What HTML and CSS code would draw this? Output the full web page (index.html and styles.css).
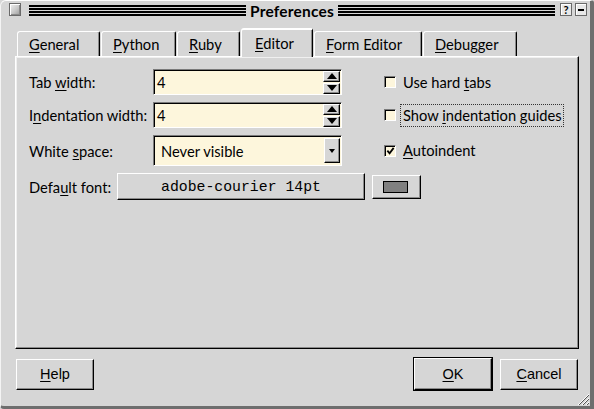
FILE: index.html
```html
<!DOCTYPE html>
<html>
<head>
<meta charset="utf-8">
<title>Preferences</title>
<link rel="stylesheet" href="styles.css">
</head>
<body>
<div class="window">
  <div class="titlebar">
    <span class="tbox close"></span>
    <span class="lines left"></span>
    <span class="title">Preferences</span>
    <span class="lines right"></span>
    <span class="tbox help">?</span>
    <span class="tbox min"><span class="bar"></span></span>
  </div>

  <div class="tabs">
    <div class="tab w-general"><u>G</u>eneral</div>
    <div class="tab w-python"><u>P</u>ython</div>
    <div class="tab w-ruby"><u>R</u>uby</div>
    <div class="tab selected w-editor"><u>E</u>ditor</div>
    <div class="tab w-form"><u>F</u>orm Editor</div>
    <div class="tab w-debug"><u>D</u>ebugger</div>
  </div>

  <div class="panel">
    <div class="grid">
      <div class="label">Tab <u>w</u>idth:</div>
      <div class="field">
        <span class="value">4</span>
        <span class="spin">
          <span class="sbtn"><span class="up"></span></span>
          <span class="sbtn"><span class="down"></span></span>
        </span>
      </div>
      <div class="check"><span class="box"></span><span class="ctext">Use hard <u>t</u>abs</span></div>

      <div class="label">I<u>n</u>dentation width:</div>
      <div class="field">
        <span class="value">4</span>
        <span class="spin">
          <span class="sbtn"><span class="up"></span></span>
          <span class="sbtn"><span class="down"></span></span>
        </span>
      </div>
      <div class="check"><span class="box"></span><span class="ctext focus">Show <u>i</u>ndentation guides</span></div>

      <div class="label">White <u>s</u>pace:</div>
      <div class="field combo">
        <span class="value combo-value">Never visible</span>
        <span class="dropbtn"><span class="down small"></span></span>
      </div>
      <div class="check"><span class="box checked"><svg width="10" height="10" viewBox="0 0 10 10"><path d="M1.5 4.5 L4 7.5 L8.5 1.5" fill="none" stroke="#000" stroke-width="2"/></svg></span><span class="ctext"><u>A</u>utoindent</span></div>
    </div>

    <div class="fontrow">
      <div class="label fontlabel">Defa<u>u</u>lt font:</div>
      <div class="btn fontbtn">adobe-courier 14pt</div>
      <div class="btn colorbtn"><span class="swatch"></span></div>
    </div>
  </div>

  <div class="buttons">
    <div class="btn action help-btn"><u>H</u>elp</div>
    <div class="spacer"></div>
    <div class="default-wrap"><div class="btn action ok-btn"><u>O</u>K</div></div>
    <div class="btn action cancel-btn"><u>C</u>ancel</div>
  </div>

  <svg class="grip" width="16" height="16" viewBox="0 0 16 16">
    <path d="M15 4 L4 15 M15 8 L8 15 M15 12 L12 15" stroke="#fff" stroke-width="1"/>
    <path d="M15 5 L5 15 M15 9 L9 15 M15 13 L13 15" stroke="#555" stroke-width="1"/>
  </svg>
</div>
</body>
</html>
```

FILE: styles.css
```css
* { box-sizing: border-box; }

html, body {
  margin: 0;
  padding: 0;
  background: #d6d6d6;
}

body {
  font-family: Lato, "DejaVu Sans", sans-serif;
  font-size: 14.7px;
  color: #000;
}

u { text-decoration: underline; text-underline-offset: 2px; }

.window {
  position: relative;
  width: 594px;
  height: 409px;
  background: #d6d6d6;
  border-top: 1px solid #fff;
  border-left: 1px solid #f4f4f4;
  border-right: 4px solid #6e6e6e;
  border-bottom: 3px solid #6e6e6e;
  border-radius: 6px 3px 0 4px;
  display: flex;
  flex-direction: column;
}

/* ---------- title bar ---------- */
.titlebar {
  height: 19px;
  display: flex;
  align-items: flex-start;
  padding: 2px 3px 0 8px;
}

.tbox {
  width: 12px;
  height: 13px;
  flex: none;
  border: 1px solid #6a6a6a;
  display: flex;
  align-items: center;
  justify-content: center;
}

.close {
  background: linear-gradient(135deg, #f2f2f2 0%, #c8c8c8 55%, #9a9a9a 100%);
  box-shadow: inset 1px 1px #fff, inset -1px -1px #888;
}

.lines {
  flex: 1;
  height: 11px;
  margin-top: 2px;
  background: repeating-linear-gradient(to bottom, #000 0 2px, transparent 2px 3px);
}

.lines.left { margin-left: 8px; }
.lines.right { margin-right: 5px; }

.title {
  font-weight: bold;
  font-size: 15.5px;
  line-height: 16px;
  padding: 0 4px;
  letter-spacing: 0.2px;
}

.help {
  font-weight: bold;
  font-size: 11px;
  line-height: 11px;
  background: #e8e8e8;
  box-shadow: inset 1px 1px #fff;
}

.min {
  margin-left: 3px;
  background: #e8e8e8;
  box-shadow: inset 1px 1px #fff;
}

.min .bar {
  width: 6px;
  height: 2px;
  background: #000;
}

/* ---------- tabs ---------- */
.tabs {
  display: flex;
  align-items: flex-start;
  height: 28px;
  margin-top: 8px;
  padding-left: 16px;
}

.tab {
  height: 25px;
  margin-top: 3px;
  margin-right: 1px;
  padding-left: 11px;
  line-height: 24px;
  border-top: 1px solid #fff;
  border-left: 1px solid #fff;
  border-right: 1px solid #000;
  border-radius: 3px 2px 0 0;
  box-shadow: inset -1px 0 #8a8a8a;
  white-space: nowrap;
}

.tab.selected {
  position: relative;
  z-index: 1;
  height: 29px;
  margin-top: 0;
  padding-left: 13px;
  line-height: 26px;
  background: #d6d6d6;
  border-top: 2px solid #fff;
}

.w-general { width: 83px; }
.w-python  { width: 75px; }
.w-ruby    { width: 63px; }
.w-editor  { width: 72px; }
.w-form    { width: 108px; }
.w-debug   { width: 94px; }

/* ---------- panel ---------- */
.panel {
  width: 564px;
  height: 293px;
  margin-left: 14px;
  border-top: 1px solid #fff;
  border-left: 1px solid #fff;
  border-right: 1px solid #000;
  border-bottom: 1px solid #000;
  box-shadow: inset -1px -1px #8a8a8a, inset 1px 1px #f0f0f0;
  padding: 12px 0 0 13px;
}

.grid {
  display: grid;
  grid-template-columns: 124px 189px 1fr;
  grid-template-rows: 26px 26px 31px;
  row-gap: 7px;
  align-items: center;
}

.label {
  white-space: nowrap;
  line-height: 18px;
}

.field {
  height: 100%;
  display: flex;
  align-items: center;
  background: #fdf6dc;
  border: 1px solid;
  border-color: #7a7a7a #fff #fff #7a7a7a;
  box-shadow: inset 1px 1px #000;
  padding: 0 1px 0 2px;
}

.value {
  flex: 1;
  line-height: 18px;
  padding-left: 1px;
}

.spin {
  display: flex;
  flex-direction: column;
  gap: 1px;
}

.sbtn {
  width: 17px;
  height: 11px;
  background: #d6d6d6;
  border: 1px solid;
  border-color: #fff #000 #000 #fff;
  box-shadow: inset -1px -1px #8a8a8a;
  display: flex;
  align-items: center;
  justify-content: center;
}

.up {
  width: 0;
  height: 0;
  border-left: 5px solid transparent;
  border-right: 5px solid transparent;
  border-bottom: 6px solid #000;
}

.down {
  width: 0;
  height: 0;
  border-left: 5px solid transparent;
  border-right: 5px solid transparent;
  border-top: 6px solid #000;
}

.down.small {
  border-left-width: 3px;
  border-right-width: 3px;
  border-top-width: 4px;
}

.combo { padding: 2px 1px 2px 2px; }

.combo-value { padding-left: 5px; }

.dropbtn {
  width: 16px;
  height: 100%;
  background: #d6d6d6;
  border: 1px solid;
  border-color: #fff #000 #000 #fff;
  box-shadow: inset -1px -1px #8a8a8a;
  display: flex;
  align-items: center;
  justify-content: center;
}

.check {
  display: flex;
  align-items: center;
  padding-left: 42px;
  white-space: nowrap;
}

.box {
  width: 12px;
  height: 12px;
  flex: none;
  background: #fdf6dc;
  border: 1px solid;
  border-color: #7a7a7a #fff #fff #7a7a7a;
  box-shadow: inset 1px 1px #000;
  display: flex;
  align-items: center;
  justify-content: center;
  margin-right: 4px;
}

.box svg { display: block; margin: 1px 0 0 1px; }

.ctext {
  border: 1px dotted transparent;
  padding: 1px 1px 2px 2px;
  line-height: 18px;
}

.ctext.focus { border-color: #333; }

/* ---------- font row ---------- */
.fontrow {
  display: flex;
  align-items: center;
  height: 27px;
  margin-top: 7px;
}

.fontlabel { width: 88px; }

.btn {
  background: #d6d6d6;
  border: 1px solid;
  border-color: #fff #000 #000 #fff;
  box-shadow: inset -1px -1px #8a8a8a;
  display: flex;
  align-items: center;
  justify-content: center;
  white-space: nowrap;
}

.fontbtn {
  width: 248px;
  height: 27px;
  font-family: "Liberation Mono", monospace;
  font-size: 14.8px;
}

.colorbtn {
  width: 49px;
  height: 24px;
  margin-left: 7px;
}

.swatch {
  width: 25px;
  height: 12px;
  background: #808080;
  border: 1px solid #000;
  margin-left: -2px;
}

/* ---------- bottom buttons ---------- */
.buttons {
  display: flex;
  align-items: center;
  margin-top: 8px;
  padding-left: 15px;
  height: 34px;
}

.spacer { flex: 1; }

.action {
  height: 31px;
  font-family: "Liberation Sans", Arial, sans-serif;
  font-size: 14.5px;
}

.help-btn { width: 78px; }

.default-wrap {
  border: 1px solid #000;
  margin-right: 7px;
}

.ok-btn { width: 78px; height: 32px; }

.cancel-btn { width: 78px; margin-right: 12px; }

.grip {
  position: absolute;
  right: 0;
  bottom: 0;
}
```
